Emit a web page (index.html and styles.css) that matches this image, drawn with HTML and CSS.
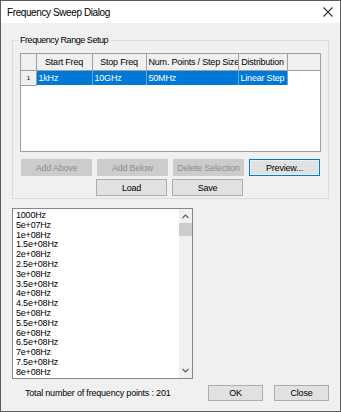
FILE: index.html
```html
<!DOCTYPE html>
<html lang="en">
<head>
    <meta charset="UTF-8">
    <title>Frequency Sweep Dialog</title>
    <link rel="stylesheet" href="styles.css">
</head>
<body>
    <div class="window">
        <div class="titlebar">
            <span class="title">Frequency Sweep Dialog</span>
            <svg class="close" width="10" height="10" viewBox="0 0 10 10">
                <path d="M0.5 0.5 L9.5 9.5 M9.5 0.5 L0.5 9.5" stroke="#333" stroke-width="1.1" fill="none"/>
            </svg>
        </div>
        <div class="content">
            <fieldset class="group">
                <legend>Frequency Range Setup</legend>
                <div class="grid">
                    <table>
                        <tr class="head">
                            <th class="corner"></th>
                            <th class="c1">Start Freq</th>
                            <th class="c2">Stop Freq</th>
                            <th class="c3">Num. Points / Step Size</th>
                            <th class="c4">Distribution</th>
                            <th class="rest"></th>
                        </tr>
                        <tr class="selected">
                            <td class="rownum">1</td>
                            <td>1kHz</td>
                            <td>10GHz</td>
                            <td>50MHz</td>
                            <td>Linear Step</td>
                            <td class="blank"></td>
                        </tr>
                    </table>
                </div>
                <div class="btn-row">
                    <button class="btn disabled">Add Above</button>
                    <button class="btn disabled">Add Below</button>
                    <button class="btn disabled">Delete Selection</button>
                    <button class="btn focus">Preview...</button>
                </div>
                <div class="btn-row second">
                    <button class="btn">Load</button>
                    <button class="btn">Save</button>
                </div>
            </fieldset>

            <div class="listbox">
                <ul class="items">
                    <li>1000Hz</li>
                    <li>5e+07Hz</li>
                    <li>1e+08Hz</li>
                    <li>1.5e+08Hz</li>
                    <li>2e+08Hz</li>
                    <li>2.5e+08Hz</li>
                    <li>3e+08Hz</li>
                    <li>3.5e+08Hz</li>
                    <li>4e+08Hz</li>
                    <li>4.5e+08Hz</li>
                    <li>5e+08Hz</li>
                    <li>5.5e+08Hz</li>
                    <li>6e+08Hz</li>
                    <li>6.5e+08Hz</li>
                    <li>7e+08Hz</li>
                    <li>7.5e+08Hz</li>
                    <li>8e+08Hz</li>
                </ul>
                <div class="scrollbar">
                    <svg class="arrow" width="7" height="5" viewBox="0 0 7 5">
                        <path d="M0.5 4 L3.5 1 L6.5 4" stroke="#606060" stroke-width="1.2" fill="none"/>
                    </svg>
                    <div class="thumb"></div>
                    <div class="track"></div>
                    <svg class="arrow down" width="7" height="5" viewBox="0 0 7 5">
                        <path d="M0.5 1 L3.5 4 L6.5 1" stroke="#606060" stroke-width="1.2" fill="none"/>
                    </svg>
                </div>
            </div>

            <div class="footer">
                <span class="total">Total number of frequency points : 201</span>
                <div class="footer-btns">
                    <button class="btn wide">OK</button>
                    <button class="btn wide">Close</button>
                </div>
            </div>
        </div>
    </div>
</body>
</html>
```

FILE: styles.css
```css
* {
    box-sizing: border-box;
}

body {
    margin: 0;
    background: #f0f0f0;
    font-family: 'Liberation Sans', Arial, sans-serif;
    font-size: 9px;
    letter-spacing: -0.2px;
    color: #000;
}

.window {
    width: 341px;
    height: 412px;
    border: 1px solid #5c5c5c;
    background: #f0f0f0;
    display: flex;
    flex-direction: column;
}

.titlebar {
    height: 22px;
    background: #fff;
    display: flex;
    align-items: center;
    justify-content: space-between;
    padding: 0 6px 0 6px;
}

.title {
    font-size: 10px;
    letter-spacing: -0.4px;
    color: #000;
}

.close {
    margin-right: 1px;
}

.content {
    flex: 1;
    padding: 11px 11px 0 11px;
    display: flex;
    flex-direction: column;
}

.group {
    margin: 0;
    width: 317px;
    border: 1px solid #dcdcdc;
    padding: 7px 7px 2px 7px;
}

.group legend {
    padding: 0 2px;
    margin-left: -2px;
    line-height: 12px;
    letter-spacing: -0.45px;
}

.grid {
    height: 99px;
    background: #fff;
    border: 1px solid #a0a0a0;
}

table {
    border-collapse: collapse;
    table-layout: fixed;
    width: 100%;
}

th, td {
    padding: 0 2px;
    height: 15px;
    font-weight: normal;
    white-space: nowrap;
    overflow: hidden;
}

.head th {
    height: 16px;
    background: #f0f0f0;
    border-right: 1px solid #a0a0a0;
    border-bottom: 1px solid #a0a0a0;
    text-align: center;
}

.head th.corner {
    width: 15px;
}

.head .c1 { width: 56px; }
.head .c2 { width: 54px; }
.head .c3 { width: 92px; }
.head .c4 { width: 49px; }

.head th.rest {
    border-right: none;
}

.selected td {
    background: #0078d7;
    color: #fff;
    border-right: 1px solid #5ea5e3;
}

.selected td.rownum {
    background: #f0f0f0;
    color: #000;
    font-size: 6px;
    text-align: center;
    border-right: 1px solid #a0a0a0;
    border-bottom: 1px solid #a0a0a0;
}

.selected td.blank {
    background: #fff;
    border: none;
}

.btn-row {
    display: flex;
    gap: 5px;
    margin-top: 7px;
    padding-left: 1px;
}

.btn-row.second {
    margin-top: 3px;
    padding-left: 76px;
}

.btn {
    width: 71px;
    height: 17px;
    padding: 0;
    border: 1px solid #adadad;
    background: #e1e1e1;
    font-family: inherit;
    font-size: 9px;
    letter-spacing: -0.2px;
    color: #000;
}

.btn.disabled {
    border-color: #cccccc;
    background: #cccccc;
    color: #8c8c8c;
}

.btn.focus {
    border: 1px solid #0078d7;
    box-shadow: inset 0 0 0 1px #e5f1fb;
}

.listbox {
    margin-top: 9px;
    width: 181px;
    height: 171px;
    background: #fff;
    border: 1px solid #828790;
    display: flex;
}

.items {
    flex: 1;
    list-style: none;
    margin: 0;
    padding: 2px 0 0 3px;
}

.items li {
    height: 9.8px;
    line-height: 9.8px;
}

.scrollbar {
    width: 13px;
    background: #f0f0f0;
    display: flex;
    flex-direction: column;
    align-items: center;
}

.arrow {
    margin: 5px 0 4px;
}

.arrow.down {
    margin: 4px 0 5px;
}

.thumb {
    width: 13px;
    height: 13px;
    background: #cdcdcd;
}

.track {
    flex: 1;
}

.footer {
    display: flex;
    align-items: center;
    justify-content: space-between;
    margin-top: 6px;
    padding-left: 13px;
}

.footer-btns {
    display: flex;
    gap: 11px;
}

.btn.wide {
    width: 55px;
    height: 16px;
}
```
